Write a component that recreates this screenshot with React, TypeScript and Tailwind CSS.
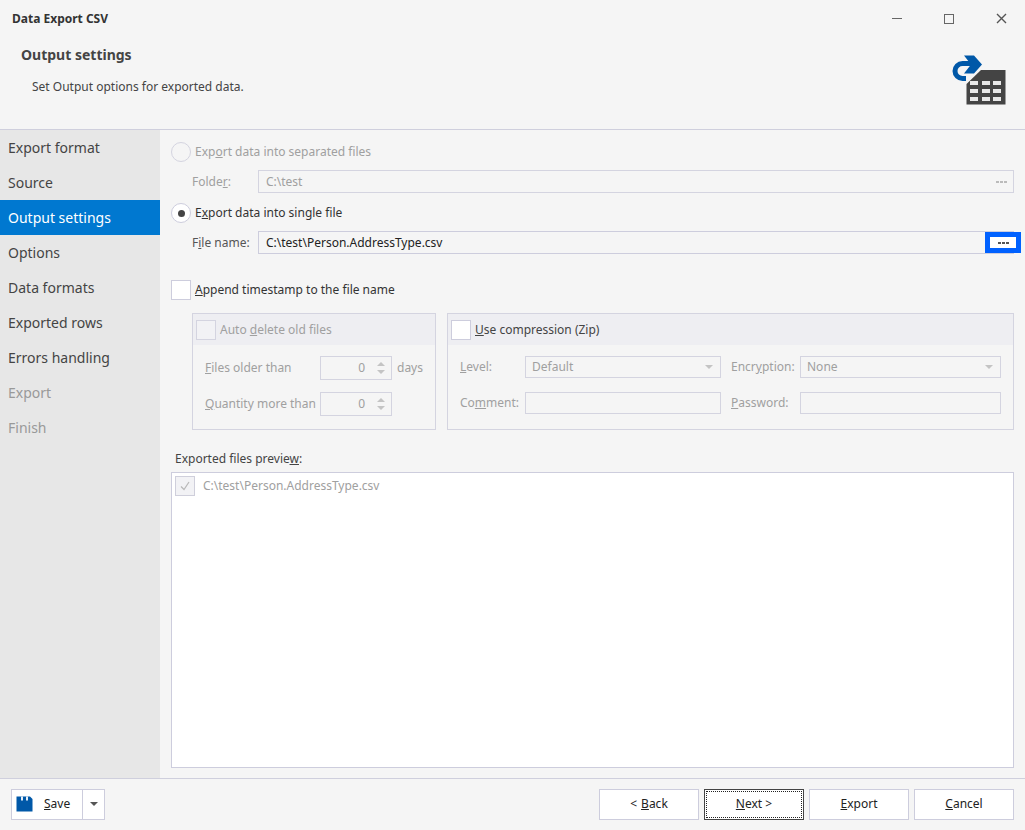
import React from 'react';

const navItems = [
  { label: 'Export format' },
  { label: 'Source' },
  { label: 'Output settings', active: true },
  { label: 'Options' },
  { label: 'Data formats' },
  { label: 'Exported rows' },
  { label: 'Errors handling' },
  { label: 'Export', disabled: true },
  { label: 'Finish', disabled: true },
];

function Radio({ checked, disabled }: { checked?: boolean; disabled?: boolean }) {
  return (
    <span className={`flex h-5 w-5 shrink-0 items-center justify-center rounded-full border ${disabled ? 'border-[#d4d4e0] bg-[#f5f5f5]' : 'border-[#cdcddd] bg-white'}`}>
      {checked && <span className="h-[7px] w-[7px] rounded-full bg-[#444444]" />}
    </span>
  );
}

function Check({ disabled }: { disabled?: boolean }) {
  return <span className={`block h-5 w-5 shrink-0 border ${disabled ? 'border-[#d4d4e0] bg-[#f2f2f5]' : 'border-[#cdcddd] bg-white'}`} />;
}

function Dots({ dark }: { dark?: boolean }) {
  return (
    <span className="flex gap-[1px]">
      <span className={`h-[2px] w-[3px] ${dark ? 'bg-[#555555]' : 'bg-[#bbbbbb]'}`} />
      <span className={`h-[2px] w-[3px] ${dark ? 'bg-[#555555]' : 'bg-[#bbbbbb]'}`} />
      <span className={`h-[2px] w-[3px] ${dark ? 'bg-[#555555]' : 'bg-[#bbbbbb]'}`} />
    </span>
  );
}

function Spin({ value }: { value: string }) {
  return (
    <div className="flex h-6 w-[72px] items-center justify-end border border-[#d4d4e0] pr-[6px] text-[#a0a0a0]">
      <span>{value}</span>
      <span className="ml-[12px] flex flex-col gap-[4px]">
        <span className="h-0 w-0 border-x-[4px] border-b-[4px] border-x-transparent border-b-[#c4c4c4]" />
        <span className="h-0 w-0 border-x-[4px] border-t-[4px] border-x-transparent border-t-[#c4c4c4]" />
      </span>
    </div>
  );
}

function Combo({ value, width }: { value: string; width: string }) {
  return (
    <div className={`flex h-[22px] items-center justify-between border border-[#d4d4e0] pl-[6px] pr-[7px] text-[#a0a0a0] ${width}`}>
      <span>{value}</span>
      <span className="h-0 w-0 border-x-[4px] border-t-[4px] border-x-transparent border-t-[#c4c4c4]" />
    </div>
  );
}

function Btn({ children, focused }: { children: React.ReactNode; focused?: boolean }) {
  return (
    <button className={`flex h-[31px] w-[100px] items-center justify-center bg-white text-[#222222] ${focused ? 'border border-[#444444] outline-1 -outline-offset-3 outline-dotted outline-[#222222]' : 'border border-[#cdcddd]'}`}>
      {children}
    </button>
  );
}

function LogoIcon() {
  return (
    <svg width="56" height="52" viewBox="0 0 56 52" className="mt-[-1px]">
      <path d="M16 24.5 H12.5 A7.5 7.5 0 0 1 12.5 9.5 H25" fill="none" stroke="#0058a8" strokeWidth="5" />
      <path d="M14 1.5 L24 1.5 L32 10.5 L24 19.5 L14 19.5 L21 10.5 Z" fill="#0058a8" />
      <path d="M16.5 30 L31 16 H55.5 V50.5 H16.5 Z" fill="#444444" />
      <g fill="#e8e8e8">
        <rect x="20" y="27" width="8" height="4" />
        <rect x="32" y="27" width="8" height="4" />
        <rect x="43" y="27" width="8" height="4" />
        <rect x="20" y="35" width="8" height="4" />
        <rect x="32" y="35" width="8" height="4" />
        <rect x="43" y="35" width="8" height="4" />
        <rect x="20" y="43" width="8" height="4" />
        <rect x="32" y="43" width="8" height="4" />
        <rect x="43" y="43" width="8" height="4" />
      </g>
    </svg>
  );
}

export default function App() {
  return (
    <div className="flex h-[830px] w-[1025px] flex-col overflow-hidden bg-[#f5f5f5] text-[12px] leading-none text-[#333333] [font-family:'Noto_Sans',sans-serif]">
      <div className="flex h-[130px] shrink-0 flex-col border-b border-[#cfcfdd]">
        <div className="flex h-[37px] shrink-0 items-center justify-between pl-3 pr-[18px]">
          <span className="text-[12px] font-bold text-[#333333]">Data Export CSV</span>
          <div className="flex items-center gap-[42px]">
            <span className="h-[1px] w-[10px] bg-[#666666]" />
            <span className="h-[10px] w-[10px] border-[1.5px] border-[#666666]" />
            <svg width="11" height="11" viewBox="0 0 11 11"><path d="M1 1 L10 10 M10 1 L1 10" stroke="#555555" strokeWidth="1.4" /></svg>
          </div>
        </div>
        <div className="flex flex-1 justify-between pl-[21px] pr-[19px]">
          <div>
            <div className="mt-[11px] text-[14px] font-bold text-[#444444]">Output settings</div>
            <div className="ml-[11px] mt-[19px] text-[#444444]">Set Output options for exported data.</div>
          </div>
          <div className="mt-[18px]"><LogoIcon /></div>
        </div>
      </div>

      <div className="flex min-h-0 flex-1 border-b border-[#cfcfdd]">
        <div className="w-[160px] shrink-0 bg-[#e7e7e7] text-[14px]">
          {navItems.map((item) => (
            <div key={item.label} className={`flex h-[35px] items-center pl-2 ${item.active ? 'bg-[#0078d0] text-white' : item.disabled ? 'text-[#999999]' : 'text-[#444444]'}`}>
              {item.label}
            </div>
          ))}
        </div>

        <div className="flex min-w-0 flex-1 flex-col px-[11px] pb-[10px] pt-3">
          <div className="flex h-5 items-center gap-1 text-[#a0a0a0]">
            <Radio disabled />
            <span>Exp<u>o</u>rt data into separated files</span>
          </div>
          <div className="mt-2 flex h-[23px] items-center pl-[21px] text-[#a0a0a0]">
            <span className="w-[66px]">Folde<u>r</u>:</span>
            <div className="flex h-[23px] flex-1 items-center justify-between border border-[#d4d4e0] pl-[7px] pr-[6px]">
              <span>C:\test</span>
              <Dots />
            </div>
          </div>
          <div className="mt-[10px] flex h-5 items-center gap-1 text-[#333333]">
            <Radio checked />
            <span>E<u>x</u>port data into single file</span>
          </div>
          <div className="mt-2 flex h-[23px] items-center pl-[21px]">
            <span className="w-[66px] text-[#555555]">F<u>i</u>le name:</span>
            <div className="relative flex h-[23px] flex-1 items-center border border-[#cdcddd] pl-[7px] text-[#222222]">
              <span>C:\test\Person.AddressType.csv</span>
              <div className="absolute right-[-8px] top-0 flex h-[21px] w-9 items-center justify-center border-[5px] border-[#0061ff] bg-white">
                <Dots dark />
              </div>
            </div>
          </div>
          <div className="mt-[26px] flex h-5 items-center gap-1 text-[#333333]">
            <Check />
            <span><u>A</u>ppend timestamp to the file name</span>
          </div>

          <div className="ml-[21px] mt-[13px] flex h-[117px] shrink-0 gap-[11px] text-[#a0a0a0]">
            <div className="w-[244px] border border-[#d4d4e0]">
              <div className="flex h-[31px] items-center gap-1 bg-[#eeeef2] pl-[3px]">
                <Check disabled />
                <span>Auto <u>d</u>elete old files</span>
              </div>
              <div className="mt-[11px] flex h-6 items-center pl-3">
                <span className="w-[115px]"><u>F</u>iles older than</span>
                <Spin value="0" />
                <span className="ml-[5px]">days</span>
              </div>
              <div className="mt-[12px] flex h-6 items-center pl-3">
                <span className="w-[115px]"><u>Q</u>uantity more than</span>
                <Spin value="0" />
              </div>
            </div>
            <div className="flex-1 border border-[#d4d4e0]">
              <div className="flex h-[31px] items-center gap-1 bg-[#eeeef2] pl-[3px] text-[#444444]">
                <Check />
                <span><u>U</u>se compression (Zip)</span>
              </div>
              <div className="mt-[11px] flex h-[22px] items-center pl-3">
                <span className="w-[65px]"><u>L</u>evel:</span>
                <Combo value="Default" width="w-[196px]" />
                <span className="ml-[10px] w-[69px]">Encr<u>y</u>ption:</span>
                <Combo value="None" width="w-[201px]" />
              </div>
              <div className="mt-[14px] flex h-[22px] items-center pl-3">
                <span className="w-[65px]">Co<u>m</u>ment:</span>
                <div className="h-[22px] w-[196px] border border-[#d4d4e0]" />
                <span className="ml-[10px] w-[69px]"><u>P</u>assword:</span>
                <div className="h-[22px] w-[201px] border border-[#d4d4e0]" />
              </div>
            </div>
          </div>

          <div className="ml-[4px] mt-[23px] text-[#444444]">Exported files previe<u>w</u>:</div>
          <div className="mt-[7px] flex-1 border border-[#cdcddd] bg-white">
            <div className="mt-[3px] flex h-5 items-center pl-[3px] text-[#a0a0a0]">
              <span className="flex h-5 w-5 items-center justify-center border border-[#cfcfdb] bg-[#f2f2f5]">
                <svg width="12" height="12" viewBox="0 0 12 12"><path d="M2 6.5 L5 9.5 L10 2" fill="none" stroke="#b8b8b8" strokeWidth="1.2" /></svg>
              </span>
              <span className="ml-[8px]">C:\test\Person.AddressType.csv</span>
            </div>
          </div>
        </div>
      </div>

      <div className="flex h-[51px] shrink-0 items-center justify-between pb-[1px] pl-[11px] pr-[11px]">
        <div className="flex h-[31px] border border-[#cdcddd] bg-white text-[#222222]">
          <div className="flex w-[71px] items-center border-r border-[#cdcddd] pl-[4px]">
            <svg width="17" height="16" viewBox="0 0 17 16">
              <path d="M0.5 0.5 H14 L16.5 3 V15.5 H0.5 Z" fill="#0058a8" />
              <rect x="5" y="0.5" width="2" height="4" fill="#e8f0f8" />
              <rect x="10" y="0.5" width="2" height="4" fill="#e8f0f8" />
            </svg>
            <span className="ml-[11px]"><u>S</u>ave</span>
          </div>
          <div className="flex w-[21px] items-center justify-center">
            <span className="h-0 w-0 border-x-[4px] border-t-[4px] border-x-transparent border-t-[#555555]" />
          </div>
        </div>
        <div className="flex gap-[5px]">
          <Btn>&lt; <u className="ml-1">B</u>ack</Btn>
          <Btn focused><u>N</u>ext &gt;</Btn>
          <Btn><u>E</u>xport</Btn>
          <Btn><u>C</u>ancel</Btn>
        </div>
      </div>
    </div>
  );
}
